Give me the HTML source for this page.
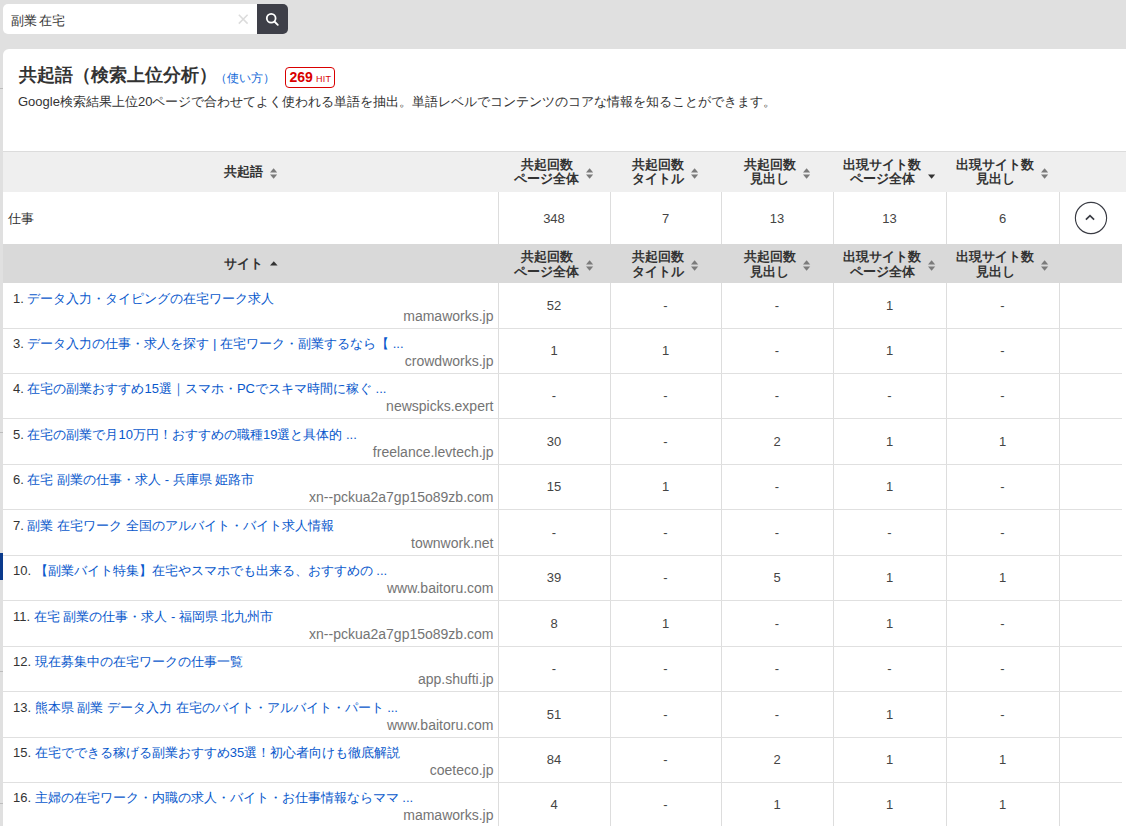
<!DOCTYPE html>
<html><head><meta charset="utf-8">
<style>
*{box-sizing:border-box;margin:0;padding:0}
html,body{width:1126px;height:826px;overflow:hidden}
body{background:#e0e0e0;font-family:"Liberation Sans",sans-serif;color:#333;position:relative}
.search{position:absolute;left:3px;top:4px;width:254px;height:30px;background:#fff;border-radius:5px 0 0 5px}
.search .q{position:absolute;left:8px;top:8.5px;word-spacing:-1.5px;font-size:13px;line-height:16px;color:#333}
.search .x{position:absolute;left:234px;top:9px}
.btn{position:absolute;left:257px;top:4px;width:31px;height:30px;background:#3e3f48;border-radius:0 5px 5px 0}
.btn svg{position:absolute;left:8px;top:8px}
.card{position:absolute;left:3px;top:49px;width:1123px;height:777px;background:#fff;border-top-left-radius:6px;overflow:hidden}
.title{position:absolute;left:16px;top:13.5px;font-size:17.7px;line-height:24px;font-weight:bold;color:#333;white-space:nowrap}
.how{position:absolute;left:212px;top:21px;font-size:12px;line-height:16px;color:#146ad8;white-space:nowrap}
.badge{position:absolute;left:282px;top:18px;width:50px;height:21px;border:1px solid #d90000;border-radius:4px;color:#d90000;white-space:nowrap}
.badge b{position:absolute;left:3.5px;top:0px;font-size:14px;line-height:18px}
.badge i{position:absolute;left:30px;top:6px;font-size:9px;line-height:10px;font-style:normal;font-weight:normal;letter-spacing:0.2px}
.desc{position:absolute;left:15px;top:43.5px;font-size:13px;line-height:18px;color:#333;white-space:nowrap}
.hline{position:absolute;left:0;top:102px;width:1123px;height:1px;background:#dcdcdc}
.hrow{position:absolute;left:0}
.hc{position:absolute;top:0;height:100%;display:flex;align-items:center;justify-content:center;font-weight:bold;font-size:13px;line-height:14.5px;color:#333}
.ht{text-align:center;display:inline-block}
.si{margin-left:7px;flex:none;position:relative;top:1px}
.vl{position:absolute;width:1px;background:#ddd}
.hl{position:absolute;left:0;width:1119px;height:1px;background:#e0e0e0}
.num{position:absolute;font-size:13px;line-height:16px;color:#444;text-align:center}
.word{position:absolute;left:5px;top:160.5px;font-size:13px;line-height:18px;color:#333}
.circ{position:absolute;left:1072px;top:153px;width:32px;height:32px;border:1.3px solid #333;border-radius:50%}
.circ svg{position:absolute;left:9px;top:10.5px}
.t{position:absolute;left:10px;font-size:13px;line-height:16px;white-space:nowrap;color:#333}
.t a{color:#0858cc;text-decoration:none}
.dom{position:absolute;right:630px;font-size:14px;line-height:16px;color:#747474;white-space:nowrap;text-align:right}
.mark{position:absolute;left:0;top:553px;width:3px;height:27px;background:#0a3a8c}
</style></head><body>

<div class="search"><span class="q">副業 在宅</span><svg class="x" width="14" height="14" viewBox="0 0 14 14"><path d="M1.8 1.8L10.6 10.6M10.6 1.8L1.8 10.6" stroke="#dcdcdc" stroke-width="1.5"/></svg></div>
<div class="btn"><svg width="16" height="16" viewBox="0 0 16 16"><circle cx="6.2" cy="6.3" r="4.4" fill="none" stroke="#fff" stroke-width="1.8"/><path d="M9.4 9.5L12.8 12.9" stroke="#fff" stroke-width="1.8" stroke-linecap="round"/></svg></div>
<div class="card">
<div class="title">共起語（検索上位分析）</div>
<div class="how">（使い方）</div>
<div class="badge"><b>269</b><i>HIT</i></div>
<div class="desc">Google検索結果上位20ページで合わせてよく使われる単語を抽出。単語レベルでコンテンツのコアな情報を知ることができます。</div>
<div class="hline"></div>
<div class="hrow" style="top:103px;height:40px;background:#efefef;width:1123px"><div class="hc" style="left:0;width:495px;top:0px"><span class="ht">共起語</span><svg class="si" width="8" height="11" viewBox="0 0 8 11"><path d="M0 4.6 L3.6 0.2 L7.2 4.6Z" fill="#7b7b7b"/><path d="M0 6.6 L3.6 10.8 L7.2 6.6Z" fill="#7b7b7b"/></svg></div><div class="hc" style="left:495px;width:112px;top:0px"><span class="ht">共起回数<br>ページ全体</span><svg class="si" width="8" height="11" viewBox="0 0 8 11"><path d="M0 4.6 L3.6 0.2 L7.2 4.6Z" fill="#7b7b7b"/><path d="M0 6.6 L3.6 10.8 L7.2 6.6Z" fill="#7b7b7b"/></svg></div><div class="hc" style="left:607px;width:111px;top:0px"><span class="ht">共起回数<br>タイトル</span><svg class="si" width="8" height="11" viewBox="0 0 8 11"><path d="M0 4.6 L3.6 0.2 L7.2 4.6Z" fill="#7b7b7b"/><path d="M0 6.6 L3.6 10.8 L7.2 6.6Z" fill="#7b7b7b"/></svg></div><div class="hc" style="left:718px;width:112px;top:0px"><span class="ht">共起回数<br>見出し</span><svg class="si" width="8" height="11" viewBox="0 0 8 11"><path d="M0 4.6 L3.6 0.2 L7.2 4.6Z" fill="#7b7b7b"/><path d="M0 6.6 L3.6 10.8 L7.2 6.6Z" fill="#7b7b7b"/></svg></div><div class="hc" style="left:830px;width:113px;top:0px"><span class="ht">出現サイト数<br>ページ全体</span><svg class="si" width="8" height="11" viewBox="0 0 8 11"><path d="M0 6.4 L3.6 10.8 L7.2 6.4Z" fill="#333"/></svg></div><div class="hc" style="left:943px;width:113px;top:0px"><span class="ht">出現サイト数<br>見出し</span><svg class="si" width="8" height="11" viewBox="0 0 8 11"><path d="M0 4.6 L3.6 0.2 L7.2 4.6Z" fill="#7b7b7b"/><path d="M0 6.6 L3.6 10.8 L7.2 6.6Z" fill="#7b7b7b"/></svg></div></div>
<div class="word">仕事</div>
<div class="num" style="left:495px;width:112px;top:162px">348</div>
<div class="num" style="left:607px;width:111px;top:162px">7</div>
<div class="num" style="left:718px;width:112px;top:162px">13</div>
<div class="num" style="left:830px;width:113px;top:162px">13</div>
<div class="num" style="left:943px;width:113px;top:162px">6</div>
<div class="vl" style="left:495px;top:143px;height:52px"></div>
<div class="vl" style="left:607px;top:143px;height:52px"></div>
<div class="vl" style="left:718px;top:143px;height:52px"></div>
<div class="vl" style="left:830px;top:143px;height:52px"></div>
<div class="vl" style="left:943px;top:143px;height:52px"></div>
<div class="vl" style="left:1056px;top:143px;height:52px"></div>
<svg style="position:absolute;left:1071px;top:152px" width="34" height="34" viewBox="0 0 34 34"><circle cx="17" cy="17" r="15.6" fill="none" stroke="#3a3c44" stroke-width="1.15"/><path d="M11.9 18.7L16 14.7L20.1 18.7" fill="none" stroke="#3a3c44" stroke-width="1.7"/></svg>
<div class="hrow" style="top:195px;height:39px;background:#d9d9d9;width:1119px"><div class="hc" style="left:0;width:495px;top:1px"><span class="ht">サイト</span><svg class="si" width="8" height="11" viewBox="0 0 8 11"><path d="M0 5.6 L3.8 1.2 L7.6 5.6Z" fill="#333"/></svg></div><div class="hc" style="left:495px;width:112px;top:1px"><span class="ht">共起回数<br>ページ全体</span><svg class="si" width="8" height="11" viewBox="0 0 8 11"><path d="M0 4.6 L3.6 0.2 L7.2 4.6Z" fill="#7b7b7b"/><path d="M0 6.6 L3.6 10.8 L7.2 6.6Z" fill="#7b7b7b"/></svg></div><div class="hc" style="left:607px;width:111px;top:1px"><span class="ht">共起回数<br>タイトル</span><svg class="si" width="8" height="11" viewBox="0 0 8 11"><path d="M0 4.6 L3.6 0.2 L7.2 4.6Z" fill="#7b7b7b"/><path d="M0 6.6 L3.6 10.8 L7.2 6.6Z" fill="#7b7b7b"/></svg></div><div class="hc" style="left:718px;width:112px;top:1px"><span class="ht">共起回数<br>見出し</span><svg class="si" width="8" height="11" viewBox="0 0 8 11"><path d="M0 4.6 L3.6 0.2 L7.2 4.6Z" fill="#7b7b7b"/><path d="M0 6.6 L3.6 10.8 L7.2 6.6Z" fill="#7b7b7b"/></svg></div><div class="hc" style="left:830px;width:113px;top:1px"><span class="ht">出現サイト数<br>ページ全体</span><svg class="si" width="8" height="11" viewBox="0 0 8 11"><path d="M0 4.6 L3.6 0.2 L7.2 4.6Z" fill="#7b7b7b"/><path d="M0 6.6 L3.6 10.8 L7.2 6.6Z" fill="#7b7b7b"/></svg></div><div class="hc" style="left:943px;width:113px;top:1px"><span class="ht">出現サイト数<br>見出し</span><svg class="si" width="8" height="11" viewBox="0 0 8 11"><path d="M0 4.6 L3.6 0.2 L7.2 4.6Z" fill="#7b7b7b"/><path d="M0 6.6 L3.6 10.8 L7.2 6.6Z" fill="#7b7b7b"/></svg></div></div>
<div class="vl" style="left:495px;top:234px;height:600px"></div>
<div class="vl" style="left:607px;top:234px;height:600px"></div>
<div class="vl" style="left:718px;top:234px;height:600px"></div>
<div class="vl" style="left:830px;top:234px;height:600px"></div>
<div class="vl" style="left:943px;top:234px;height:600px"></div>
<div class="vl" style="left:1056px;top:234px;height:600px"></div>
<div class="hl" style="top:279px"></div>
<div class="t" style="top:242px">1. <a>データ入力・タイピングの在宅ワーク求人</a></div>
<div class="dom" style="top:259px;right:632.5px">mamaworks.jp</div>
<div class="num" style="left:495px;width:112px;top:249px">52</div>
<div class="num" style="left:607px;width:111px;top:249px">-</div>
<div class="num" style="left:718px;width:112px;top:249px">-</div>
<div class="num" style="left:830px;width:113px;top:249px">1</div>
<div class="num" style="left:943px;width:113px;top:249px">-</div>
<div class="hl" style="top:324px"></div>
<div class="t" style="top:287px">3. <a>データ入力の仕事・求人を探す | 在宅ワーク・副業するなら【 ...</a></div>
<div class="dom" style="top:304px;right:632.5px">crowdworks.jp</div>
<div class="num" style="left:495px;width:112px;top:294px">1</div>
<div class="num" style="left:607px;width:111px;top:294px">1</div>
<div class="num" style="left:718px;width:112px;top:294px">-</div>
<div class="num" style="left:830px;width:113px;top:294px">1</div>
<div class="num" style="left:943px;width:113px;top:294px">-</div>
<div class="hl" style="top:369px"></div>
<div class="t" style="top:332px">4. <a>在宅の副業おすすめ15選｜スマホ・PCでスキマ時間に稼ぐ ...</a></div>
<div class="dom" style="top:349px;right:632.5px">newspicks.expert</div>
<div class="num" style="left:495px;width:112px;top:339px">-</div>
<div class="num" style="left:607px;width:111px;top:339px">-</div>
<div class="num" style="left:718px;width:112px;top:339px">-</div>
<div class="num" style="left:830px;width:113px;top:339px">-</div>
<div class="num" style="left:943px;width:113px;top:339px">-</div>
<div class="hl" style="top:415px"></div>
<div class="t" style="top:378px">5. <a>在宅の副業で月10万円！おすすめの職種19選と具体的 ...</a></div>
<div class="dom" style="top:395px;right:632.5px">freelance.levtech.jp</div>
<div class="num" style="left:495px;width:112px;top:385px">30</div>
<div class="num" style="left:607px;width:111px;top:385px">-</div>
<div class="num" style="left:718px;width:112px;top:385px">2</div>
<div class="num" style="left:830px;width:113px;top:385px">1</div>
<div class="num" style="left:943px;width:113px;top:385px">1</div>
<div class="hl" style="top:460px"></div>
<div class="t" style="top:423px">6. <a>在宅 副業の仕事・求人 - 兵庫県 姫路市</a></div>
<div class="dom" style="top:440px;right:632.5px">xn--pckua2a7gp15o89zb.com</div>
<div class="num" style="left:495px;width:112px;top:430px">15</div>
<div class="num" style="left:607px;width:111px;top:430px">1</div>
<div class="num" style="left:718px;width:112px;top:430px">-</div>
<div class="num" style="left:830px;width:113px;top:430px">1</div>
<div class="num" style="left:943px;width:113px;top:430px">-</div>
<div class="hl" style="top:506px"></div>
<div class="t" style="top:469px">7. <a>副業 在宅ワーク 全国のアルバイト・バイト求人情報</a></div>
<div class="dom" style="top:486px;right:632.5px">townwork.net</div>
<div class="num" style="left:495px;width:112px;top:476px">-</div>
<div class="num" style="left:607px;width:111px;top:476px">-</div>
<div class="num" style="left:718px;width:112px;top:476px">-</div>
<div class="num" style="left:830px;width:113px;top:476px">-</div>
<div class="num" style="left:943px;width:113px;top:476px">-</div>
<div class="hl" style="top:551px"></div>
<div class="t" style="top:514px">10. <a>【副業バイト特集】在宅やスマホでも出来る、おすすめの ...</a></div>
<div class="dom" style="top:531px;right:632.5px">www.baitoru.com</div>
<div class="num" style="left:495px;width:112px;top:521px">39</div>
<div class="num" style="left:607px;width:111px;top:521px">-</div>
<div class="num" style="left:718px;width:112px;top:521px">5</div>
<div class="num" style="left:830px;width:113px;top:521px">1</div>
<div class="num" style="left:943px;width:113px;top:521px">1</div>
<div class="hl" style="top:597px"></div>
<div class="t" style="top:560px">11. <a>在宅 副業の仕事・求人 - 福岡県 北九州市</a></div>
<div class="dom" style="top:577px;right:632.5px">xn--pckua2a7gp15o89zb.com</div>
<div class="num" style="left:495px;width:112px;top:567px">8</div>
<div class="num" style="left:607px;width:111px;top:567px">1</div>
<div class="num" style="left:718px;width:112px;top:567px">-</div>
<div class="num" style="left:830px;width:113px;top:567px">1</div>
<div class="num" style="left:943px;width:113px;top:567px">-</div>
<div class="hl" style="top:642px"></div>
<div class="t" style="top:605px">12. <a>現在募集中の在宅ワークの仕事一覧</a></div>
<div class="dom" style="top:622px;right:632.5px">app.shufti.jp</div>
<div class="num" style="left:495px;width:112px;top:612px">-</div>
<div class="num" style="left:607px;width:111px;top:612px">-</div>
<div class="num" style="left:718px;width:112px;top:612px">-</div>
<div class="num" style="left:830px;width:113px;top:612px">-</div>
<div class="num" style="left:943px;width:113px;top:612px">-</div>
<div class="hl" style="top:688px"></div>
<div class="t" style="top:651px">13. <a>熊本県 副業 データ入力 在宅のバイト・アルバイト・パート ...</a></div>
<div class="dom" style="top:668px;right:632.5px">www.baitoru.com</div>
<div class="num" style="left:495px;width:112px;top:658px">51</div>
<div class="num" style="left:607px;width:111px;top:658px">-</div>
<div class="num" style="left:718px;width:112px;top:658px">-</div>
<div class="num" style="left:830px;width:113px;top:658px">1</div>
<div class="num" style="left:943px;width:113px;top:658px">-</div>
<div class="hl" style="top:733px"></div>
<div class="t" style="top:696px">15. <a>在宅でできる稼げる副業おすすめ35選！初心者向けも徹底解説</a></div>
<div class="dom" style="top:713px;right:632.5px">coeteco.jp</div>
<div class="num" style="left:495px;width:112px;top:703px">84</div>
<div class="num" style="left:607px;width:111px;top:703px">-</div>
<div class="num" style="left:718px;width:112px;top:703px">2</div>
<div class="num" style="left:830px;width:113px;top:703px">1</div>
<div class="num" style="left:943px;width:113px;top:703px">1</div>
<div class="hl" style="top:778px"></div>
<div class="t" style="top:741px">16. <a>主婦の在宅ワーク・内職の求人・バイト・お仕事情報ならママ ...</a></div>
<div class="dom" style="top:758px;right:632.5px">mamaworks.jp</div>
<div class="num" style="left:495px;width:112px;top:748px">4</div>
<div class="num" style="left:607px;width:111px;top:748px">-</div>
<div class="num" style="left:718px;width:112px;top:748px">1</div>
<div class="num" style="left:830px;width:113px;top:748px">1</div>
<div class="num" style="left:943px;width:113px;top:748px">1</div>
</div>
<div class="mark"></div>
<div style="position:absolute;left:0;top:88px;width:3px;height:1px;background:#bdbdbd"></div>
<div style="position:absolute;left:0;top:432px;width:3px;height:1px;background:#bdbdbd"></div>
<div style="position:absolute;left:0;top:671px;width:3px;height:1px;background:#bdbdbd"></div>
<div style="position:absolute;left:0;top:803px;width:3px;height:1px;background:#bdbdbd"></div>
</body></html>
